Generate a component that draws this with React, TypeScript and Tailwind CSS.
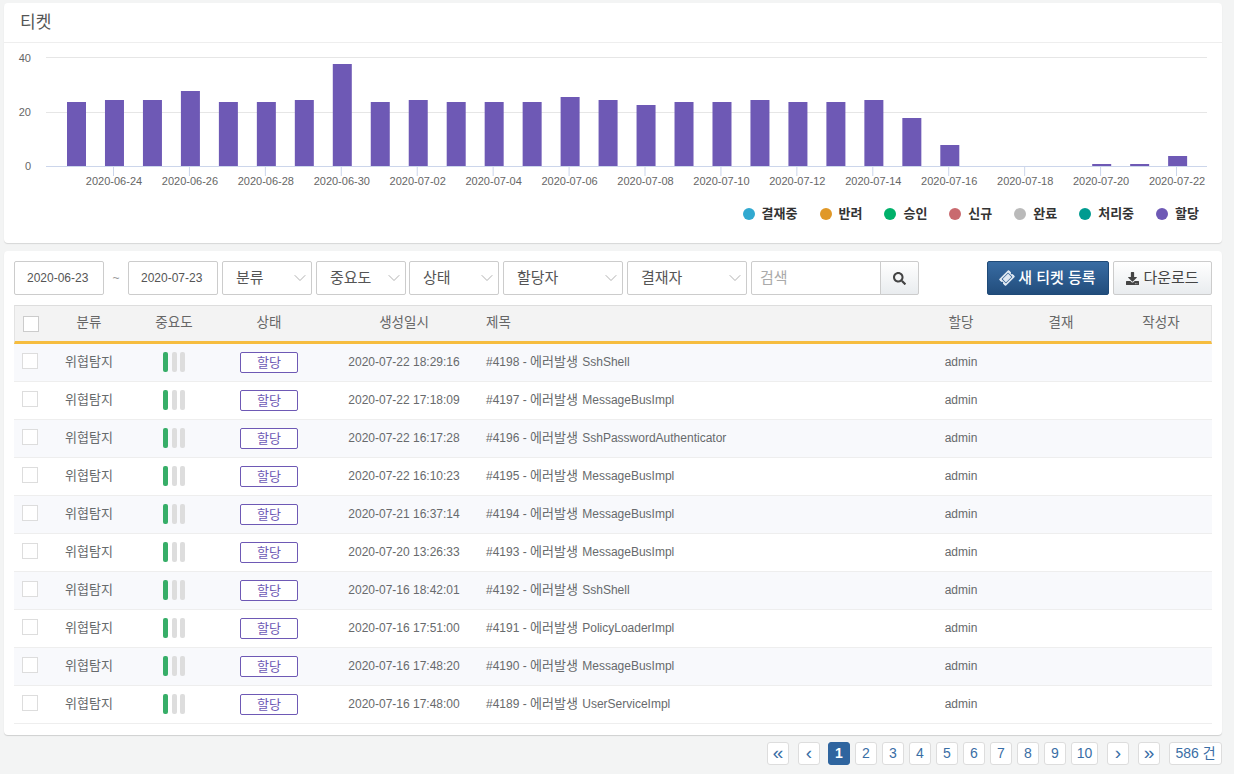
import React from 'react';
import { ChevronDown } from 'lucide-react';
import { FaDownload, FaSearch, FaTicketAlt } from 'react-icons/fa';

const heights = [64,66,66,75,64,64,66,102,64,66,64,64,64,69,66,61,64,64,66,64,64,66,48,21,0,0,0,2,2,10];
const ticks = ['2020-06-24','2020-06-26','2020-06-28','2020-06-30','2020-07-02','2020-07-04','2020-07-06','2020-07-08','2020-07-10','2020-07-12','2020-07-14','2020-07-16','2020-07-18','2020-07-20','2020-07-22'];
const legend = [['결재중','#31a9d0'],['반려','#e09828'],['승인','#00b16a'],['신규','#c96a6f'],['완료','#bababa'],['처리중','#009b90'],['할당','#6e59b5']];
const rows = [
  ['2020-07-22 18:29:16','#4198','SshShell'],
  ['2020-07-22 17:18:09','#4197','MessageBusImpl'],
  ['2020-07-22 16:17:28','#4196','SshPasswordAuthenticator'],
  ['2020-07-22 16:10:23','#4195','MessageBusImpl'],
  ['2020-07-21 16:37:14','#4194','MessageBusImpl'],
  ['2020-07-20 13:26:33','#4193','MessageBusImpl'],
  ['2020-07-16 18:42:01','#4192','SshShell'],
  ['2020-07-16 17:51:00','#4191','PolicyLoaderImpl'],
  ['2020-07-16 17:48:20','#4190','MessageBusImpl'],
  ['2020-07-16 17:48:00','#4189','UserServiceImpl'],
];

const FONT = '"Liberation Sans", "Noto Sans CJK KR", sans-serif';

function Chart() {
  return (
    <svg width={1218} height={145} viewBox="0 0 1218 145" className="block" style={{ fontFamily: FONT }}>
      {[14.5, 69.5].map((y) => <line key={y} x1={42} x2={1203} y1={y} y2={y} stroke="#e6e6e6" />)}
      {[['40', 19], ['20', 73], ['0', 127]].map(([t, y]) => (
        <text key={t} x={27} y={y as number} textAnchor="end" fontSize={11} fill="#666">{t}</text>
      ))}
      {heights.map((h, i) => h > 0 && (
        <rect key={i} x={63 + i * 37.97} y={123 - h} width={19} height={h} fill="#6e59b5" />
      ))}
      <line x1={42} x2={1203} y1={123.5} y2={123.5} stroke="#ccd6eb" />
      {ticks.map((t, i) => {
        const x = 109.5 + i * 75.93;
        return (
          <g key={t}>
            <line x1={x} x2={x} y1={124} y2={133} stroke="#ccd6eb" />
            <text x={x + 0.5} y={142} textAnchor="middle" fontSize={11} fill="#666">{t}</text>
          </g>
        );
      })}
    </svg>
  );
}

function Select({ label, w }: { label: string; w: string }) {
  return (
    <div className={`${w} h-[34px] flex items-center justify-between pl-[13px] pr-[1px] bg-white border border-[#ccc] rounded-[2px] text-[15px] text-[#555]`}>
      <span>{label}</span>
      <ChevronDown size={20} strokeWidth={1.1} className="text-[#aaa]" />
    </div>
  );
}

function DateBox({ value }: { value: string }) {
  return (
    <div className="w-[90px] h-[34px] flex items-center pl-[12px] bg-white border border-[#ccc] rounded-[2px] text-[12px] text-[#555]">{value}</div>
  );
}

function Page({ children, active, w = 'w-[22px]', cls = '' }: { children: React.ReactNode; active?: boolean; w?: string; cls?: string }) {
  return (
    <div className={`${w} ${cls} h-[23px] flex items-center justify-center rounded-[3px] border text-[14px] ${active ? 'bg-[#2f659f] border-[#2f659f] text-white font-bold' : 'bg-white border-[#ddd] text-[#3a6ea5]'}`}>
      {children}
    </div>
  );
}

const Arrow = ({ children }: { children: React.ReactNode }) => (
  <span className="text-[19px] leading-none -mt-[3px]">{children}</span>
);

const K = ({ children }: { children: React.ReactNode }) => <span className="text-[13px]">{children}</span>;

export default function App() {
  return (
    <div className="w-[1234px] h-[774px] overflow-hidden bg-[#f3f4f4] pt-[3px] px-[4px] text-[#676a6c] text-[12px]" style={{ fontFamily: FONT }}>
      <section className="w-[1218px] h-[240px] bg-white rounded-[4px] shadow-[0_1px_1px_rgba(0,0,0,0.12)]">
        <h2 className="h-[40px] pl-[16px] flex items-center border-b border-[#eee] text-[17px] font-normal text-[#555]">티켓</h2>
        <Chart />
        <ul className="flex justify-end items-center gap-[22px] pr-[23px] mt-[16px] text-[13px] font-bold text-[#333]">
          {legend.map(([t, c]) => (
            <li key={t} className="flex items-center gap-[7px]">
              <span className="w-[12px] h-[12px] rounded-full" style={{ backgroundColor: c }} />
              {t}
            </li>
          ))}
        </ul>
      </section>

      <section className="w-[1218px] h-[484px] mt-[8px] bg-white rounded-[4px] shadow-[0_1px_1px_rgba(0,0,0,0.15)] pt-[10px] pl-[10px] pr-[10px]">
        <div className="flex items-center h-[34px]">
          <DateBox value="2020-06-23" />
          <span className="w-[24px] text-center text-[#999]">~</span>
          <DateBox value="2020-07-23" />
          <div className="flex gap-[4px] ml-[4px]">
            <Select label="분류" w="w-[90px]" />
            <Select label="중요도" w="w-[90px]" />
            <Select label="상태" w="w-[90px] -ml-[1px]" />
            <Select label="할당자" w="w-[120px]" />
            <Select label="결재자" w="w-[120px]" />
          </div>
          <div className="flex ml-[4px]">
            <div className="w-[130px] h-[34px] flex items-center pl-[8px] border border-[#ccc] rounded-l-[2px] text-[15px] text-[#aaa]">검색</div>
            <div className="w-[39px] h-[34px] -ml-[1px] flex items-center justify-center border border-[#ccc] rounded-r-[2px] bg-gradient-to-b from-white to-[#e9ecef] text-[#444]"><FaSearch size={13} /></div>
          </div>
          <div className="ml-auto flex gap-[4px]">
            <div className="w-[122px] h-[34px] flex items-center justify-center gap-[4px] rounded-[2px] border border-[#1f4a78] bg-gradient-to-b from-[#386ca3] to-[#224d7c] text-white text-[15px] font-medium">
              <FaTicketAlt size={14} className="-rotate-45 text-[#dfe8f2]" />새 티켓 등록
            </div>
            <div className="w-[99px] h-[34px] flex items-center justify-center gap-[4px] rounded-[2px] border border-[#ccc] bg-gradient-to-b from-white to-[#e9ecef] text-[#444] text-[15px]">
              <FaDownload size={13} />다운로드
            </div>
          </div>
        </div>

        <table className="w-[1198px] mt-[10px] table-fixed border-separate border-spacing-0">
          <colgroup>
            <col className="w-[32px]" />
            <col className="w-[86px]" />
            <col className="w-[84px]" />
            <col className="w-[106px]" />
            <col className="w-[164px]" />
            <col />
            <col className="w-[100px]" />
            <col className="w-[100px]" />
            <col className="w-[101px]" />
          </colgroup>
          <thead>
            <tr className="h-[39px] bg-[#f3f3f3] text-[13.5px] text-[#666] [&>th]:p-0 [&>th]:font-normal [&>th]:border-t [&>th]:border-t-[#ddd] [&>th]:border-b-[3px] [&>th]:border-b-[#f6bd3f]">
              <th className="border-l border-l-[#e3e3e3]"><span className="block w-[16px] h-[16px] ml-[8px] bg-white border border-[#ccc]" /></th>
              <th>분류</th>
              <th>중요도</th>
              <th>상태</th>
              <th>생성일시</th>
              <th className="pl-[2px] text-left">제목</th>
              <th>할당</th>
              <th>결재</th>
              <th className="border-r border-r-[#e3e3e3]">작성자</th>
            </tr>
          </thead>
          <tbody>
            {rows.map(([date, id, name], i) => (
              <tr key={id} className={`h-[38px] ${i % 2 === 0 ? 'bg-[#f8f9fc]' : 'bg-white'} [&>td]:p-0 [&>td]:border-b [&>td]:border-b-[#eee]`}>
                <td><span className="block w-[16px] h-[16px] ml-[8px] -mt-[3px] bg-white border border-[#ddd]" /></td>
                <td className="text-center"><div className="-mt-[2px]"><K>위협탐지</K></div></td>
                <td>
                  <div className="flex justify-center -mt-[1px]">
                    <span className="w-[5px] h-[20px] rounded-[2px] bg-[#37ae68]" />
                    <span className="w-[5px] h-[20px] ml-[4px] rounded-[2px] bg-[#dddddd]" />
                    <span className="w-[5px] h-[20px] ml-[3px] rounded-[2px] bg-[#dddddd]" />
                  </div>
                </td>
                <td>
                  <div className="w-[58px] h-[21px] mx-auto flex items-center justify-center border border-[#6e59b5] rounded-[2px] bg-white text-[#6e59b5]"><K>할당</K></div>
                </td>
                <td className="text-center"><div className="-mt-[2px]">{date}</div></td>
                <td className="pl-[2px]"><div className="-mt-[2px]">{id} - <K>에러발생</K><span className="pl-[1px]"> {name}</span></div></td>
                <td className="text-center"><div className="-mt-[2px]">admin</div></td>
                <td />
                <td />
              </tr>
            ))}
          </tbody>
        </table>
      </section>

      <nav className="w-[1218px] flex justify-end mt-[7px] h-[23px]">
        <Page cls="mr-[9px]"><Arrow>«</Arrow></Page>
        <Page cls="mr-[8px]"><Arrow>‹</Arrow></Page>
        <div className="flex gap-[5px]">
          {[1,2,3,4,5,6,7,8,9].map((n) => <Page key={n} active={n === 1}>{n}</Page>)}
          <Page w="w-[27px]">10</Page>
        </div>
        <Page cls="ml-[9px]"><Arrow>›</Arrow></Page>
        <Page cls="ml-[9px]"><Arrow>»</Arrow></Page>
        <Page w="w-[53px]" cls="ml-[9px]">586 건</Page>
      </nav>
    </div>
  );
}
